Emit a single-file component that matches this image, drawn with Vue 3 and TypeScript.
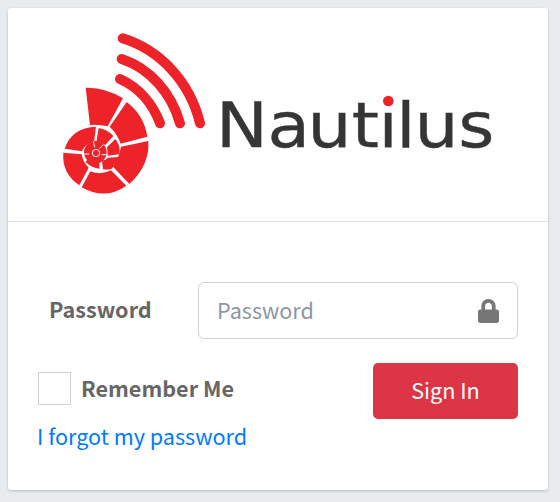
<template>
  <div class="page">
    <div class="card">
      <div class="card-header">
        <svg class="logo" width="540" height="213" viewBox="8 8 540 213">
          <g transform="translate(30 10) scale(0.33333)">
            <g fill="none" stroke="#ee2329" stroke-width="30" stroke-linecap="round">
              <path d="M278 85C390 120 480 215 510 340" />
              <path d="M275 147C360 175 425 250 450 340" />
              <path d="M270 207C325 232 368 280 390 340" />
            </g>
            <g fill="#ee2329">
              <path d="M167 233Q225 231 279 265L233 349Q205 342 180 345Z" />
              <path d="M290 276Q342 315 352 380L272 401Q262 372 239 350Z" />
              <path d="M355 393Q360 465 298 522L249 470Q268 440 273 410Z" />
              <path d="M289 527Q225 572 155 532L181 484Q212 497 243 481Z" />
              <path d="M100 428L155 433Q158 456 176 473L148 526Q95 490 100 428Z" />
              <path d="M104 416Q125 353 198 350L192 396Q165 400 156 424Z" />
              <path d="M206 354Q232 358 250 378L226 405Q213 398 199 397Z" />
              <path d="M256 387Q272 405 268 433L233 437Q233 423 231 412Z" />
              <path d="M266 441Q259 462 245 476Q232 480 219 478L216 452Q228 450 234 443Z" />
              <path d="M166 455Q185 474 209 476L207 452Q190 452 178 444Z" />
              <circle cx="196" cy="427" r="34" />
            </g>
            <g fill="none" stroke="#fff" stroke-width="3">
              <path d="M162 432H178" />
              <path d="M190 394L194 412" />
              <path d="M220 404L208 416" />
              <path d="M230 434H214" />
              <circle cx="198" cy="429" r="11" />
            </g>
            <circle cx="200" cy="430" r="4" fill="#ee2329" />
          </g>
          <text
            class="wordmark"
            transform="scale(1.1 1)"
            x="196.3 243.2 279.5 319.7 344.2 360.3 376.8 416.6"
            y="147"
          >Nautilus</text>
          <rect x="383" y="105" width="11" height="5" fill="#fff" />
          <circle cx="388.3" cy="101" r="5.3" fill="#ee2329" />
        </svg>
      </div>
      <form class="card-body" @submit.prevent>
        <div class="password-row">
          <label class="password-label" for="password">Password</label>
          <div class="input-group">
            <input id="password" type="password" placeholder="Password" />
            <svg class="lock" viewBox="0 0 448 512" width="21" height="24">
              <path
                fill="#777"
                d="M400 224h-24v-72C376 68.2 307.8 0 224 0S72 68.2 72 152v72H48c-26.5 0-48 21.5-48 48v192c0 26.5 21.5 48 48 48h352c26.5 0 48-21.5 48-48V272c0-26.5-21.5-48-48-48zm-104 0H152v-72c0-39.7 32.3-72 72-72s72 32.3 72 72v72z"
              />
            </svg>
          </div>
        </div>
        <div class="actions">
          <div class="left-col">
            <label class="remember">
              <span class="check"></span>
              <span class="remember-text">Remember Me</span>
            </label>
            <a class="forgot" href="#">I forgot my password</a>
          </div>
          <button class="sign-in" type="submit">Sign In</button>
        </div>
      </form>
    </div>
  </div>
</template>

<script setup lang="ts">
</script>

<style>
html,
body {
  background: #e9ecef;
}
</style>

<style scoped>
.page {
  width: 560px;
  height: 502px;
  padding: 8px 12px 12px 8px;
  box-sizing: border-box;
  font-family: "Noto Sans CJK SC", "Noto Sans", sans-serif;
  font-size: 21.6px;
  overflow: hidden;
}

.card {
  height: 482px;
  background: #fff;
  border-radius: 3px;
  box-shadow: 0 1px 3px rgba(0, 0, 0, 0.2);
}

.card-header {
  height: 213px;
  border-bottom: 1px solid #dee2e6;
}

.logo {
  display: block;
}

.wordmark {
  font-family: "DejaVu Sans", sans-serif;
  font-size: 63px;
  fill: #353535;
  stroke: #353535;
  stroke-width: 0.4px;
}

.card-body {
  padding: 60px 30px 0;
}

.password-row {
  display: flex;
  align-items: center;
}

.password-label {
  width: 160px;
  padding: 0 0 4px 11px;
  box-sizing: border-box;
  font-weight: 700;
  color: #666;
  line-height: 28px;
}

.input-group {
  flex: 1;
  height: 57px;
  display: flex;
  align-items: center;
  padding: 0 18px;
  box-sizing: border-box;
  border: 1px solid #ced4da;
  border-radius: 6px;
}

.input-group input {
  flex: 1;
  min-width: 0;
  border: none;
  outline: none;
  padding: 0 0 2px;
  font: inherit;
  color: #495057;
}

.input-group input::placeholder {
  color: #8b97a2;
  opacity: 1;
}

.lock {
  flex: none;
}

.actions {
  display: flex;
  justify-content: space-between;
  align-items: flex-start;
  margin-top: 24px;
}

.left-col {
  display: flex;
  flex-direction: column;
  padding-top: 9px;
}

.remember {
  display: flex;
  align-items: center;
  gap: 10px;
  font-weight: 700;
  color: #666;
}

.remember-text {
  padding-bottom: 2px;
}

.check {
  width: 33px;
  height: 33px;
  box-sizing: border-box;
  border: 1px solid #d3cfc9;
}

.forgot {
  margin: 15px 0 0 -1px;
  color: #007bff;
  text-decoration: none;
  line-height: 32px;
}

.sign-in {
  width: 145px;
  height: 56px;
  padding: 0 0 4px;
  border: none;
  border-radius: 5px;
  background: #dc3545;
  color: #fff;
  font: inherit;
}
</style>
